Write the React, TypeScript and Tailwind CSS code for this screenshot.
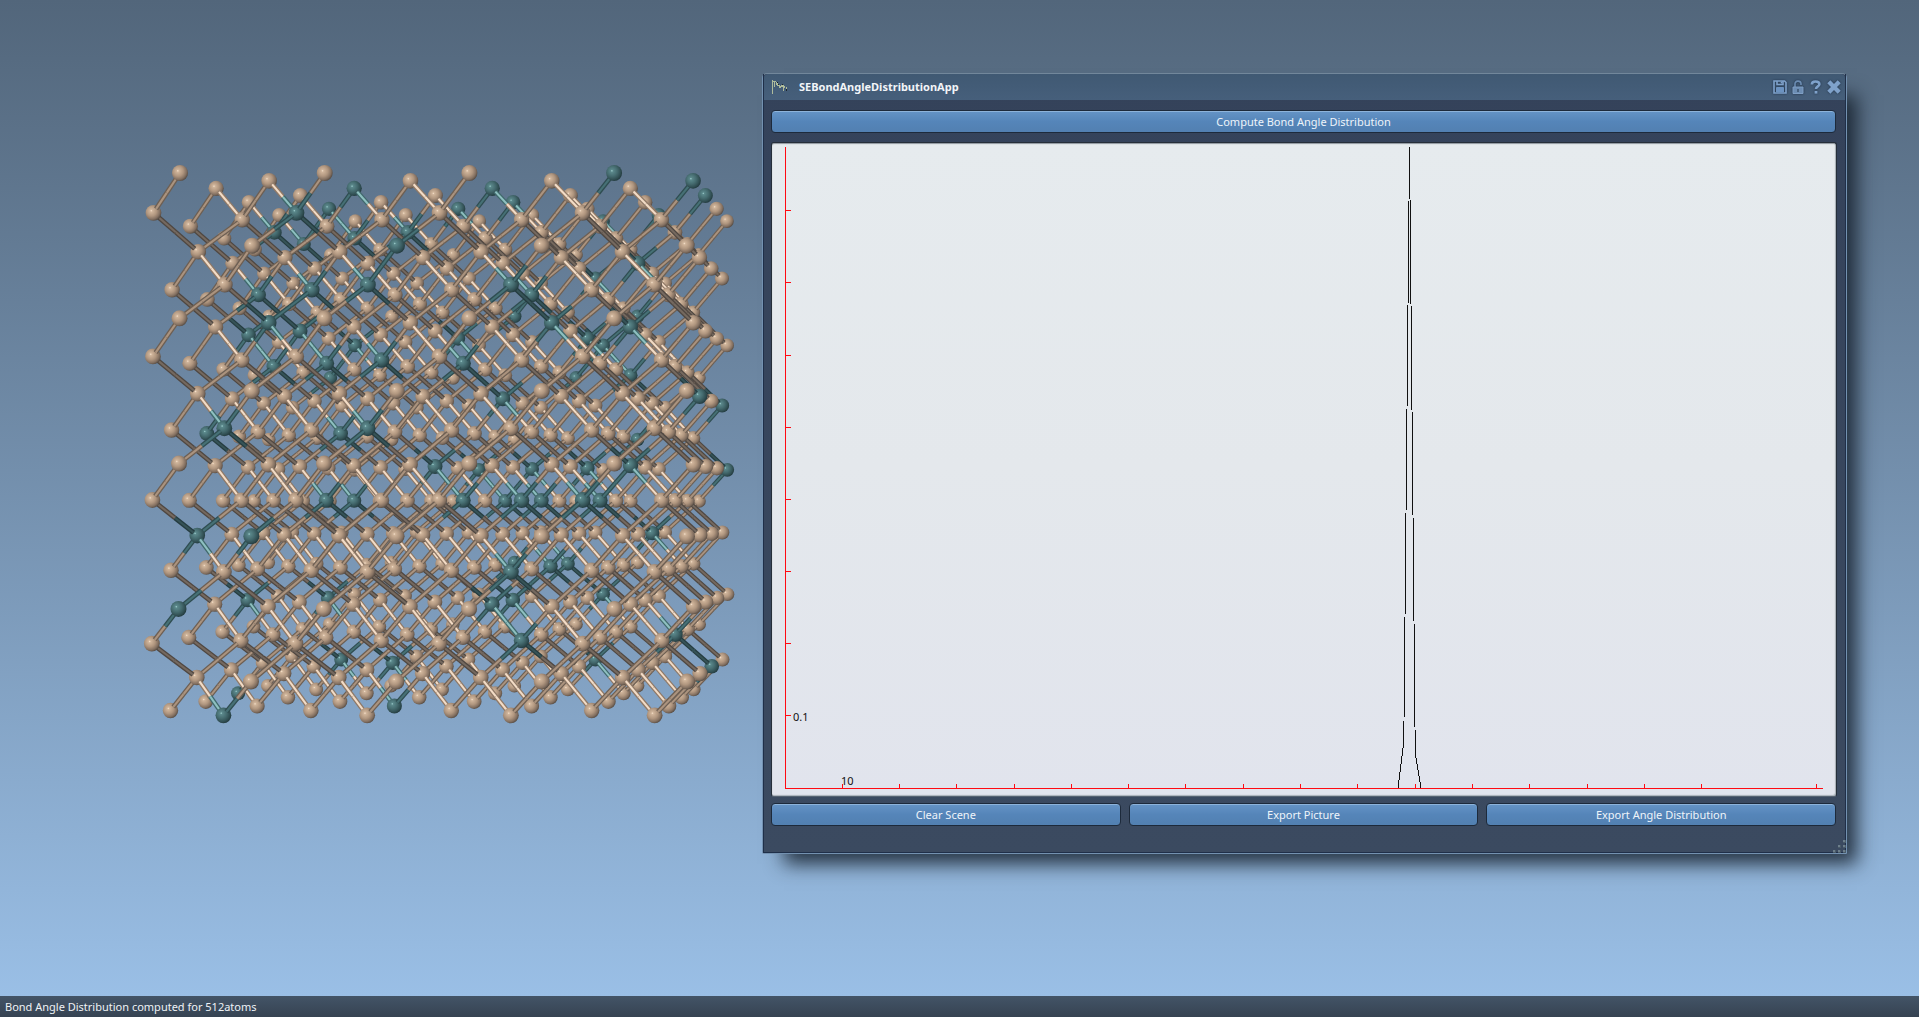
import { useMemo } from 'react';

type Atom = {
  layer: number;
  col: number;
  row: number;
  x: number;
  y: number;
  r: number;
  germanium: boolean;
};

type Half = { x1: number; y1: number; x2: number; y2: number; width: number; base: string; shine: string };

const LAYERS = 16;
const CELLS = 4;

// Canvas points of the teal atoms
const TEAL_POINTS = [
  [354, 188], [297, 213], [329, 209], [275, 232], [303, 243], [353, 237], [406, 230], [397, 247],
  [258, 294], [312, 290], [367, 284], [267, 322], [249, 334], [300, 331], [273, 364], [326, 362],
  [329, 374], [354, 343], [380, 360], [224, 427], [207, 432], [339, 433], [367, 427], [458, 207],
  [492, 188], [513, 201], [613, 173], [694, 181], [706, 196], [602, 218], [658, 213], [640, 261],
  [511, 284], [531, 293], [516, 316], [597, 277], [552, 322], [631, 325], [588, 337], [604, 344],
  [636, 316], [460, 336], [464, 363], [575, 376], [630, 373], [502, 398], [700, 396], [723, 405],
  [637, 436], [326, 499], [354, 499], [198, 535], [252, 536], [248, 599], [329, 596], [179, 607],
  [238, 692], [223, 715], [342, 658], [393, 661], [395, 706], [436, 466], [479, 468], [532, 468],
  [588, 468], [631, 465], [727, 468], [463, 499], [505, 499], [522, 499], [542, 499], [583, 499],
  [600, 499], [653, 532], [511, 571], [513, 560], [550, 565], [568, 562], [492, 604], [513, 599],
  [603, 592], [522, 639], [595, 659], [676, 634], [712, 664],
];

// [base, shine] for each bond direction
const TAN = { light: ['#8f7967', '#f3dcc6'], mid: ['#6d5f53', '#ab937e'], dark: ['#4f4741', '#75695f'] };
const TEAL = { light: ['#40696c', '#8ec0c0'], mid: ['#2f4d51', '#467075'], dark: ['#253c40', '#365357'] };

function project(col: number, row: number, layer: number) {
  const f = 1 / (1 + 0.012 * layer);
  return {
    x: 968 + (-788 + (144.7 + 0.2 * row) * col - 0.5 * row) * f,
    y: 507 + (-334 + 145.3 * row) * f,
    r: 8 * f,
  };
}

function buildCrystal() {
  // in-plane offsets of the two atoms per cell, repeated every four layers
  const basis = [
    [[0, 0], [0.5, 0.5]],
    [[-0.25, 0.25], [0.25, 0.75]],
    [[0, 0.5], [0.5, 0]],
    [[0.25, 0.25], [-0.25, 0.75]],
  ];
  const layers: Atom[][] = [];
  for (let layer = 0; layer < LAYERS; layer++) {
    const atoms: Atom[] = [];
    for (let i = 0; i < CELLS; i++) {
      for (let j = 0; j < CELLS; j++) {
        basis[layer % 4].forEach(([dx, dy]) => {
          const col = i + dx;
          const row = j + dy;
          atoms.push({ layer, col, row, ...project(col, row, layer), germanium: false });
        });
      }
    }
    layers.push(atoms);
  }

  const all = layers.flat();
  TEAL_POINTS.forEach(([px, py]) => {
    let best = all[0];
    let bestDistance = Infinity;
    all.forEach((atom) => {
      const distance = Math.hypot(atom.x - px, atom.y - py) + atom.layer * 0.1;
      if (distance < bestDistance) {
        best = atom;
        bestDistance = distance;
      }
    });
    best.germanium = true;
  });

  return layers
    .map((atoms, layer) => {
      const halves: Half[] = [];
      const behind = layers[layer + 1] ?? [];
      atoms.forEach((near) => {
        behind.forEach((far) => {
          const dc = far.col - near.col;
          const dr = far.row - near.row;
          if (Math.abs(dc) !== 0.25 || Math.abs(dr) !== 0.25) return;
          const tone = dc * dr < 0 ? 'mid' : dr < 0 ? 'light' : 'dark';
          const length = Math.hypot(near.x - far.x, near.y - far.y);
          const mx = (near.x + far.x) / 2;
          const my = (near.y + far.y) / 2;
          const inset = (far.r * 0.6) / length;
          const sx = far.x + (near.x - far.x) * inset;
          const sy = far.y + (near.y - far.y) * inset;
          const [fb, fs] = (far.germanium ? TEAL : TAN)[tone];
          const [nb, ns] = (near.germanium ? TEAL : TAN)[tone];
          const width = near.r * 0.6;
          halves.push({ x1: sx, y1: sy, x2: mx, y2: my, width, base: fb, shine: fs });
          halves.push({ x1: mx, y1: my, x2: near.x, y2: near.y, width, base: nb, shine: ns });
        });
      });
      return { atoms, halves };
    })
    .reverse();
}

function Crystal() {
  const layers = useMemo(buildCrystal, []);
  return (
    <svg viewBox="0 0 760 760" className="block w-[760px] shrink-0" role="img" aria-label="Crystal structure">
      <defs>
        <radialGradient id="tan" cx="0.4" cy="0.4" r="0.64" fx="0.36" fy="0.36">
          <stop offset="0" stopColor="#f6e2cd" />
          <stop offset="0.12" stopColor="#d0b59b" />
          <stop offset="0.5" stopColor="#b0967f" />
          <stop offset="0.8" stopColor="#837061" />
          <stop offset="1" stopColor="#524840" />
        </radialGradient>
        <radialGradient id="teal" cx="0.4" cy="0.4" r="0.64" fx="0.36" fy="0.36">
          <stop offset="0" stopColor="#a4d3d2" />
          <stop offset="0.12" stopColor="#5b888b" />
          <stop offset="0.5" stopColor="#456b6f" />
          <stop offset="0.8" stopColor="#314f53" />
          <stop offset="1" stopColor="#21383c" />
        </radialGradient>
      </defs>
      {layers.map(({ atoms, halves }, index) => (
        <g key={index}>
          {halves.map((h, i) => (
            <g key={i}>
              <line x1={h.x1} y1={h.y1} x2={h.x2} y2={h.y2} stroke={h.base} strokeWidth={h.width} />
              <line x1={h.x1} y1={h.y1} x2={h.x2} y2={h.y2} stroke={h.shine} strokeWidth={h.width * 0.45} />
            </g>
          ))}
          {atoms.map((a, i) => (
            <circle key={i} cx={a.x} cy={a.y} r={a.r} fill={a.germanium ? 'url(#teal)' : 'url(#tan)'} />
          ))}
        </g>
      ))}
    </svg>
  );
}

// [x, y from, y to] of each one pixel step of the curve
const CURVE = [
  [637, 4, 56],
  [636, 58, 160], [638, 57, 161],
  [635, 162, 263], [639, 163, 267],
  [634, 266, 367], [640, 269, 372],
  [633, 370, 471], [641, 375, 478],
  [632, 474, 574], [642, 481, 584],
  [631, 578, 605], [643, 587, 615],
  [630, 605, 613], [644, 615, 621],
  [629, 613, 621], [645, 621, 627],
  [628, 621, 629], [646, 627, 633],
  [627, 629, 637], [647, 633, 639],
  [626, 637, 645], [648, 639, 645],
];

const X_TICKS = [70, 127, 184, 242, 299, 356, 413, 471, 528, 585, 643, 700, 757, 815, 872, 929, 1044];
const Y_TICKS = [67, 139, 212, 284, 356, 428, 500, 572];

function Chart() {
  return (
    <div className="rounded-[3px] border border-[#262f3a] border-b-[#566271] bg-linear-to-b from-[#e6ebee] via-[#e4e8ec] to-[#e1e4ed] shadow-[inset_0_1px_1px_#8d959d,inset_-1px_-1px_1px_#a9b1b8]">
      <svg viewBox="0 0 1064 653" className="block w-full" shapeRendering="crispEdges" role="img" aria-label="Bond angle distribution">
        <g fill="#111">
          {CURVE.map(([x, from, to]) => (
            <rect key={x} x={x} y={from} width="1" height={to - from} />
          ))}
        </g>
        <g fill="#ff0a12">
          <rect x="13" y="4" width="1" height="642" />
          <rect x="13" y="645" width="1038" height="1" />
          {X_TICKS.map((x) => (
            <rect key={x} x={x} y="641" width="1" height="4" />
          ))}
          {Y_TICKS.map((y) => (
            <rect key={y} x="14" y={y} width="5" height="1" />
          ))}
        </g>
        <g fill="#111" className="font-['Noto_Sans',sans-serif] text-[11px]">
          <text x="21" y="578">0.1</text>
          <text x="69" y="642">10</text>
        </g>
      </svg>
    </div>
  );
}

function ToolButton({ label }: { label: string }) {
  return (
    <button
      type="button"
      className="h-[23px] min-w-0 flex-1 rounded-[4px] border border-[#1d2a3b] bg-linear-to-b from-[#6594c6] via-[#5585b9] to-[#5280b1] text-center text-[11px] leading-5 text-[#eef4fa] shadow-[inset_0_1px_0_#8db3da]"
    >
      {label}
    </button>
  );
}

function AppLogo() {
  return (
    <svg viewBox="0 0 16 16" className="size-4" shapeRendering="crispEdges" aria-hidden="true">
      <g fill="#aebb9c">
        <rect x="0" y="1" width="1" height="14" />
        <rect x="1" y="2" width="3" height="1" />
        <rect x="2" y="3" width="1" height="5" />
        <rect x="4" y="3" width="1" height="3" />
        <rect x="5" y="4" width="1" height="3" />
        <rect x="6" y="6" width="2" height="1" />
        <rect x="7" y="7" width="2" height="2" />
        <rect x="9" y="6" width="2" height="2" />
        <rect x="11" y="6" width="1" height="6" />
        <rect x="12" y="7" width="1" height="2" />
        <rect x="14" y="8" width="1" height="2" />
      </g>
      <g fill="#1a242c">
        <rect x="5" y="3" width="1" height="1" />
        <rect x="6" y="5" width="1" height="1" />
        <rect x="10" y="5" width="1" height="1" />
        <rect x="14" y="10" width="1" height="2" />
      </g>
    </svg>
  );
}

function TitleIcons() {
  const button = 'block drop-shadow-[0_0_1px_#1f3148]';
  return (
    <div className="flex items-center gap-1 text-[#7fa2cb]">
      <button type="button" aria-label="Save" className={button}>
        <svg viewBox="0 0 14 14" className="size-3.5" fill="none" stroke="currentColor" strokeWidth="1.6">
          <path d="M1 1h10.5L13 2.500V13H1z" />
          <path d="M4 1v3.500h6V1" />
          <path d="M8.500 1.500v2" />
          <path d="M3.500 7.500h7V12h-7z" fill="#6c93c1" stroke="#6c93c1" strokeWidth="1" />
        </svg>
      </button>
      <button type="button" aria-label="Unlock" className={button}>
        <svg viewBox="0 0 14 14" className="size-3.5" fill="none" stroke="#6c8db3" strokeWidth="1.6">
          <path d="M4 7V4a3 2.600 0 0 1 6-.500V5" />
          <path d="M2 7h10v6.500H2z" fill="#6c8db3" stroke="#7f9fc4" strokeWidth="1" />
          <path d="M7 9v3" stroke="#3c546f" />
        </svg>
      </button>
      <button type="button" aria-label="Help" className={button}>
        <svg viewBox="0 0 14 14" className="size-3.5" fill="none" stroke="currentColor" strokeWidth="2.6">
          <path d="M2.800 4.500C2.800 2.200 4.500 1.500 6.500 1.500s3.900.900 3.900 2.800c0 2-3.400 2.200-3.400 4.700" />
          <path d="M5.600 12.300h2.800" />
        </svg>
      </button>
      <button type="button" aria-label="Close" className={button}>
        <svg viewBox="0 0 14 14" className="size-3.5" stroke="currentColor" strokeWidth="4.400">
          <path d="M1.800 1.800l10.400 10.400M12.200 1.800L1.800 12.200" />
        </svg>
      </button>
    </div>
  );
}

function ResizeGrip() {
  const dots = [[10, 0], [5, 5], [10, 5], [0, 10], [5, 10], [10, 10]];
  return (
    <svg viewBox="0 0 13 13" className="absolute right-0 bottom-0 size-[13px]" shapeRendering="crispEdges" aria-hidden="true">
      {dots.map(([x, y]) => (
        <g key={`${x}-${y}`}>
          <rect x={x} y={y} width="3" height="3" fill="#4a5b68" />
          <rect x={x} y={y} width="2" height="2" fill="#6d7f8b" />
        </g>
      ))}
    </svg>
  );
}

function DistributionWindow() {
  return (
    <section className="absolute top-[73px] right-[72px] left-[762px] rounded-t-[5px] rounded-b-[2px] border border-[#7391b0] border-t-[#72879b] bg-linear-to-b from-[#34425a] to-[#3b4a60] shadow-[16px_16px_18px_-6px_rgba(20,30,42,0.85)]">
      <div className="border border-t-0 border-[#1f2f49]">
        <header className="flex h-[26px] items-center rounded-t-[4px] bg-linear-to-b from-[#405973] to-[#465f7b] pr-1 pl-2">
          <AppLogo />
          <h1 className="ml-[11px] flex-1 text-[11px] leading-6 font-bold text-[#f2f5f8]">SEBondAngleDistributionApp</h1>
          <TitleIcons />
        </header>
        <div className="flex flex-col pt-2.5 pr-2 pb-[26px] pl-[7px]">
          <div className="flex pr-px">
            <ToolButton label="Compute Bond Angle Distribution" />
          </div>
          <div className="mt-[9px] mb-1.5">
            <Chart />
          </div>
          <div className="flex gap-2 pr-px">
            <ToolButton label="Clear Scene" />
            <ToolButton label="Export Picture" />
            <ToolButton label="Export Angle Distribution" />
          </div>
        </div>
      </div>
      <ResizeGrip />
    </section>
  );
}

export default function App() {
  return (
    <div className="flex h-screen flex-col overflow-hidden font-['Noto_Sans','Open_Sans',sans-serif]">
      <main className="relative flex min-h-0 flex-1 items-start bg-linear-to-b from-[#52667b] to-[#9abfe6]">
        <Crystal />
        <DistributionWindow />
      </main>
      <footer className="h-[21px] bg-linear-to-b from-[#435467] to-[#364352] px-[5px] text-[11px] leading-[22px] text-[#eef2f6]">
        Bond Angle Distribution computed for 512atoms
      </footer>
    </div>
  );
}
